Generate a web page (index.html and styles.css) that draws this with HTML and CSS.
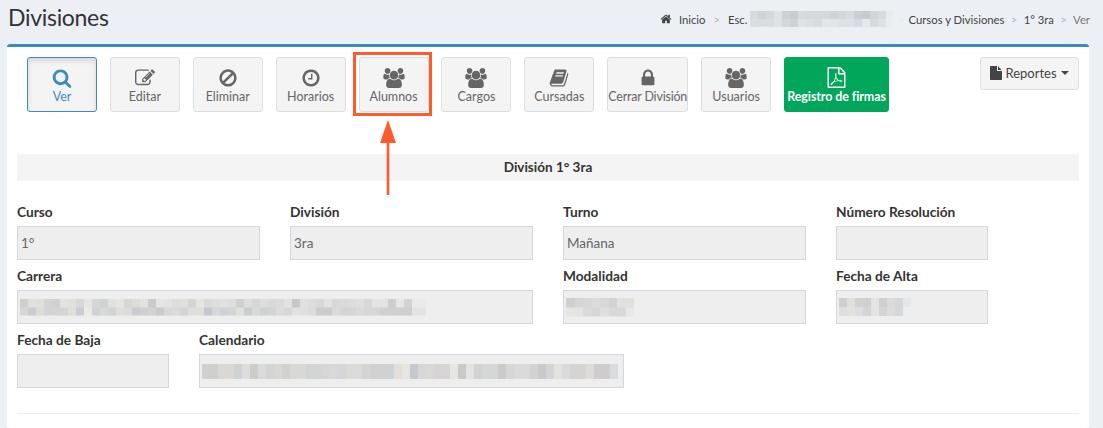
FILE: index.html
```html
<!DOCTYPE html>
<html>
<head>
<title>Divisiones</title>
<link rel="stylesheet" href="styles.css">
</head>

<body>
    <!-- ========================= Header ========================== -->
    <div class="header">
        <h1>Divisiones</h1>
        <div class="crumbs">
            <svg class="home" viewBox="0 0 1792 1792"><path d="M1472 992v480q0 26-19 45t-45 19h-384v-384h-256v384h-384q-26 0-45-19t-19-45v-480q0-1 .5-3t.5-3l575-474 575 474q1 2 1 6zm223-69l-62 74q-8 9-21 11h-3q-13 0-21-7l-692-577-692 577q-12 8-24 7-13-2-21-11l-62-74q-8-10-7-23.5t11-21.5l719-599q32-26 76-26t76 26l244 204v-195q0-14 9-23t23-9h192q14 0 23 9t9 23v408l219 182q10 8 11 21.5t-7 23.5z"/></svg>
            <span>Inicio</span>
            <span class="sep sep-wide">&gt;</span>
            <span>Esc.</span>
            <span class="blur blur-crumb"></span>
            <span class="sep sep-faint">&gt;</span>
            <span>Cursos y Divisiones</span>
            <span class="sep">&gt;</span>
            <span>1° 3ra</span>
            <span class="sep">&gt;</span>
            <span class="muted">Ver</span>
        </div>
    </div>

    <!-- ========================= Main box ========================== -->
    <div class="box">
        <div class="toolbar">
            <a class="btn active">
                <svg viewBox="0 0 1792 1792"><path d="M1216 832q0-185-131.5-316.5t-316.5-131.5-316.5 131.5-131.5 316.5 131.5 316.5 316.5 131.5 316.5-131.5 131.5-316.5zm512 832q0 52-38 90t-90 38q-54 0-90-38l-343-342q-179 124-399 124-143 0-273.5-55.5t-225-150-150-225-55.5-273.5 55.5-273.5 150-225 225-150 273.5-55.5 273.5 55.5 225 150 150 225 55.5 273.5q0 220-124 399l343 343q37 37 37 90z"/></svg>
                Ver
            </a>
            <a class="btn">
                <svg viewBox="0 0 1792 1792"><path d="M888 1184l116-116-152-152-116 116v56h96v96h56zm440-720q-16-16-33 1l-350 350q-17 17-1 33t33-1l350-350q17-17 1-33zm80 594v190q0 119-84.5 203.5t-203.5 84.5h-832q-119 0-203.5-84.5t-84.5-203.5v-832q0-119 84.5-203.5t203.5-84.5h832q63 0 117 25 15 7 18 23 3 17-9 29l-49 49q-14 14-32 8-23-6-45-6h-832q-66 0-113 47t-47 113v832q0 66 47 113t113 47h832q66 0 113-47t47-113v-126q0-13 9-22l64-64q15-15 35-7t20 29zm-96-738l288 288-672 672h-288v-288zm444 132l-92 92-288-288 92-92q28-28 68-28t68 28l152 152q28 28 28 68t-28 68z"/></svg>
                Editar
            </a>
            <a class="btn">
                <svg viewBox="0 0 1792 1792"><path d="M1440 893q0-161-87-295l-754 753q137 89 297 89 111 0 211.5-43.5t173.5-116.5 116-174.5 43-212.5zm-999 299l755-754q-135-91-300-91-148 0-273 73t-198 199-73 274q0 162 89 299zm1223-299q0 157-61 300t-163.5 246-245 164-298.5 61-298.5-61-245-164-163.5-246-61-300 61-299.5 163.5-245.5 245-164 298.5-61 298.5 61 245 164 163.5 245.5 61 299.5z"/></svg>
                Eliminar
            </a>
            <a class="btn">
                <svg viewBox="0 0 1792 1792"><path d="M1024 544v448q0 14-9 23t-23 9h-320q-14 0-23-9t-9-23v-64q0-14 9-23t23-9h224v-352q0-14 9-23t23-9h64q14 0 23 9t9 23zm416 352q0-148-73-273t-198-198-273-73-273 73-198 198-73 273 73 273 198 198 273 73 273-73 198-198 73-273zm224 0q0 209-103 385.5t-279.5 279.5-385.5 103-385.5-103-279.5-279.5-103-385.5 103-385.5 279.5-279.5 385.5-103 385.5 103 279.5 279.5 103 385.5z"/></svg>
                Horarios
            </a>
            <a class="btn">
                <svg class="wide" viewBox="0 0 1920 1792"><path d="M593 896q-162 5-265 128h-134q-82 0-138-40.5t-56-118.5q0-353 124-353 6 0 43.5 21t97.5 42.5 119 21.5q67 0 133-23-5 37-5 66 0 139 81 256zm1071 637q0 120-73 189.5t-194 69.5h-874q-121 0-194-69.5t-73-189.5q0-53 3.5-103.5t14-109 26.5-108.5 43-97.5 62-81 85.5-53.5 111.5-20q10 0 43 21.5t73 48 107 48 135 21.5 135-21.5 107-48 73-48 43-21.5q61 0 111.5 20t85.5 53.5 62 81 43 97.5 26.5 108.5 14 109 3.5 103.5zm-1024-1277q0 106-75 181t-181 75-181-75-75-181 75-181 181-75 181 75 75 181zm704 384q0 159-112.5 271.5t-271.5 112.5-271.5-112.5-112.5-271.5 112.5-271.5 271.5-112.5 271.5 112.5 112.5 271.5zm576 225q0 78-56 118.5t-138 40.5h-134q-103-123-265-128 81-117 81-256 0-29-5-66 66 23 133 23 59 0 119-21.5t97.5-42.5 43.5-21q124 0 124 353zm-128-609q0 106-75 181t-181 75-181-75-75-181 75-181 181-75 181 75 75 181z"/></svg>
                Alumnos
            </a>
            <a class="btn">
                <svg class="wide" viewBox="0 0 1920 1792"><path d="M593 896q-162 5-265 128h-134q-82 0-138-40.5t-56-118.5q0-353 124-353 6 0 43.5 21t97.5 42.5 119 21.5q67 0 133-23-5 37-5 66 0 139 81 256zm1071 637q0 120-73 189.5t-194 69.5h-874q-121 0-194-69.5t-73-189.5q0-53 3.5-103.5t14-109 26.5-108.5 43-97.5 62-81 85.5-53.5 111.5-20q10 0 43 21.5t73 48 107 48 135 21.5 135-21.5 107-48 73-48 43-21.5q61 0 111.5 20t85.5 53.5 62 81 43 97.5 26.5 108.5 14 109 3.5 103.5zm-1024-1277q0 106-75 181t-181 75-181-75-75-181 75-181 181-75 181 75 75 181zm704 384q0 159-112.5 271.5t-271.5 112.5-271.5-112.5-112.5-271.5 112.5-271.5 271.5-112.5 271.5 112.5 112.5 271.5zm576 225q0 78-56 118.5t-138 40.5h-134q-103-123-265-128 81-117 81-256 0-29-5-66 66 23 133 23 59 0 119-21.5t97.5-42.5 43.5-21q124 0 124 353zm-128-609q0 106-75 181t-181 75-181-75-75-181 75-181 181-75 181 75 75 181z"/></svg>
                Cargos
            </a>
            <a class="btn">
                <svg viewBox="0 0 1792 1792"><path d="M1703 478q40 57 18 129l-275 906q-19 64-76.5 107.5t-122.5 43.5h-923q-77 0-148.5-53.5t-99.5-131.5q-24-67-2-127 0-4 3-27t4-37q1-8-3-21.5t-3-19.5q2-11 8-21t16.5-23.5 16.5-23.5q23-38 45-91.5t30-91.5q3-10 .5-30t-.5-28q3-11 17-28t17-23q21-36 42-92t25-90q1-9-2.5-32t.5-28q4-13 22-30.5t22-22.5q19-26 42.5-84.5t27.5-96.5q1-8-3-25.5t-2-26.5q2-8 9-18t18-23 17-21q8-12 16.5-30.5t15-35 16-36 19.5-32 26.5-23.5 36-11.5 47.5 5.5l-1 3q38-9 51-9h761q74 0 114 56t18 130l-274 906q-36 119-71.5 153.5t-128.5 34.5h-869q-27 0-38 15-11 16-1 43 24 70 144 70h923q29 0 56-15.5t35-41.5l300-987q7-22 5-57 38 15 59 43zm-1064 2q-4 13 2 22.5t20 9.5h608q13 0 25.5-9.5t16.5-22.5l21-64q4-13-2-22.5t-20-9.5h-608q-13 0-25.5 9.5t-16.5 22.5zm-83 256q-4 13 2 22.5t20 9.5h608q13 0 25.5-9.5t16.5-22.5l21-64q4-13-2-22.5t-20-9.5h-608q-13 0-25.5 9.5t-16.5 22.5z"/></svg>
                Cursadas
            </a>
            <a class="btn btn-long">
                <svg viewBox="0 0 1152 1792"><path d="M320 768h512v-192q0-106-75-181t-181-75-181 75-75 181v192zm832 96v576q0 40-28 68t-68 28h-960q-40 0-68-28t-28-68v-576q0-40 28-68t68-28h32v-192q0-184 132-316t316-132 316 132 132 316v192h32q40 0 68 28t28 68z"/></svg>
                Cerrar División
            </a>
            <a class="btn">
                <svg class="wide" viewBox="0 0 1920 1792"><path d="M593 896q-162 5-265 128h-134q-82 0-138-40.5t-56-118.5q0-353 124-353 6 0 43.5 21t97.5 42.5 119 21.5q67 0 133-23-5 37-5 66 0 139 81 256zm1071 637q0 120-73 189.5t-194 69.5h-874q-121 0-194-69.5t-73-189.5q0-53 3.5-103.5t14-109 26.5-108.5 43-97.5 62-81 85.5-53.5 111.5-20q10 0 43 21.5t73 48 107 48 135 21.5 135-21.5 107-48 73-48 43-21.5q61 0 111.5 20t85.5 53.5 62 81 43 97.5 26.5 108.5 14 109 3.5 103.5zm-1024-1277q0 106-75 181t-181 75-181-75-75-181 75-181 181-75 181 75 75 181zm704 384q0 159-112.5 271.5t-271.5 112.5-271.5-112.5-112.5-271.5 112.5-271.5 271.5-112.5 271.5 112.5 112.5 271.5zm576 225q0 78-56 118.5t-138 40.5h-134q-103-123-265-128 81-117 81-256 0-29-5-66 66 23 133 23 59 0 119-21.5t97.5-42.5 43.5-21q124 0 124 353zm-128-609q0 106-75 181t-181 75-181-75-75-181 75-181 181-75 181 75 75 181z"/></svg>
                Usuarios
            </a>
            <a class="btn btn-green">
                <svg viewBox="0 0 1792 1792"><path d="M1596 380q28 28 48 76t20 88v1152q0 40-28 68t-68 28h-1344q-40 0-68-28t-28-68v-1600q0-40 28-68t68-28h896q40 0 88 20t76 48zm-444-244v376h376q-10-29-22-41l-313-313q-12-12-41-22zm384 1528v-1024h-416q-40 0-68-28t-28-68v-416h-768v1536h1280zm-514-593q33 26 84 56 59-7 117-7 147 0 177 49 16 22 2 52 0 1-1 2l-2 2v1q-6 38-71 38-48 0-115-20t-130-53q-221 24-392 83-153 262-242 262-15 0-28-7l-24-12q-1-1-6-5-10-10-6-36 9-40 56-91.5t132-96.5q14-9 23 6 2 2 2 4 52-85 107-197 68-136 104-262-24-82-30.5-159.5t6.5-127.5q11-40 42-40h22q23 0 35 15 18 21 9 68-2 6-4 8 1 3 1 8v30q-2 123-14 192 55 164 146 238zm-576 411q52-24 137-158-51 40-87.5 84t-49.5 74zm398-920q-15 42-2 132 1-7 7-44 0-3 7-43 1-4 4-8-1-1-1-2-1-2-1-3-1-22-13-36 0 1-1 2v2zm-124 661q135-54 284-81-2-1-13-9.5t-16-13.5q-76-67-127-176-27 86-83 197-30 56-45 83zm646-16q-24-24-140-24 76 28 124 28 14 0 18-1 0-1-2-3z"/></svg>
                Registro de firmas
            </a>
            <a class="btn-report">
                <svg viewBox="0 0 1536 1792"><path d="M1024 512v-472q22 14 36 28l408 408q14 14 28 36h-472zm-128 32q0 40 28 68t68 28h544v1056q0 40-28 68t-68 28h-1344q-40 0-68-28t-28-68v-1600q0-40 28-68t68-28h800v544z"/></svg>
                Reportes
                <span class="caret"></span>
            </a>
        </div>

        <div class="section-title">División 1° 3ra</div>

        <div class="form">
            <div class="row">
                <div class="col w243"><label>Curso</label><div class="field">1°</div></div>
                <div class="col w243"><label>División</label><div class="field">3ra</div></div>
                <div class="col w243"><label>Turno</label><div class="field">Mañana</div></div>
                <div class="col w152"><label>Número Resolución</label><div class="field"></div></div>
            </div>
            <div class="row">
                <div class="col w516"><label>Carrera</label><div class="field"><span class="blur blur-carrera"></span></div></div>
                <div class="col w243"><label>Modalidad</label><div class="field"><span class="blur blur-modalidad"></span></div></div>
                <div class="col w152"><label>Fecha de Alta</label><div class="field"><span class="blur blur-alta"></span></div></div>
            </div>
            <div class="row">
                <div class="col w152"><label>Fecha de Baja</label><div class="field"></div></div>
                <div class="col w425"><label>Calendario</label><div class="field"><span class="blur blur-calendario"></span></div></div>
            </div>
        </div>

        <hr>
    </div>

    <!-- annotation drawn over the screenshot -->
    <div class="mark"></div>
    <svg class="arrow" width="16" height="75" viewBox="0 0 16 75"><path d="M8 0L16 23H9.3V75H6.7V23H0z"/></svg>
</body>

</html>
```

FILE: styles.css
```css
* {
    margin: 0;
    padding: 0;
    box-sizing: border-box;
}

html, body {
    height: 100%;
    overflow: hidden;
}

body {
    position: relative;
    background-color: #ecf0f5;
    font-family: "Lato", "Noto Sans", sans-serif;
    font-size: 14px;
    color: #333;
}

/* header */
.header {
    display: flex;
    justify-content: space-between;
    align-items: center;
    height: 44px;
    padding: 0 13px 0 8px;
}

h1 {
    font-size: 23px;
    font-weight: 400;
    line-height: 34px;
    margin-top: -10px;
    letter-spacing: -0.3px;
}

.crumbs {
    display: flex;
    align-items: center;
    font-size: 11.3px;
    color: #444;
    margin-top: -6px;
}

.home {
    width: 12px;
    height: 12px;
    margin-right: 7px;
    fill: #444;
}

.sep {
    color: #b5b5b5;
    margin: 0 6.3px;
}

.sep-wide {
    margin: 0 8px;
}

.sep-faint {
    color: #e4e7ec;
    margin: 0 4.5px;
}

.muted {
    color: #777;
}

/* box */
.box {
    margin: 0 14px 0 7px;
    height: 384px;
    padding: 10px 10px 0;
    background-color: #fff;
    border-top: 3px solid #3c8dbc;
    border-radius: 3px;
}

.toolbar {
    display: flex;
    gap: 12.9px;
    padding-left: 10px;
}

.btn {
    display: flex;
    flex-direction: column;
    align-items: center;
    justify-content: flex-end;
    flex: none;
    width: 70px;
    height: 55px;
    padding-bottom: 6px;
    background-color: #f4f4f4;
    border: 1px solid #ddd;
    border-radius: 3px;
    font-size: 12.5px;
    line-height: 16px;
    color: #666;
    white-space: nowrap;
}

.btn svg {
    width: 20px;
    height: 20px;
    margin-bottom: 1px;
    fill: #666;
}

.btn svg.wide {
    width: 22px;
}

.btn.active {
    border-color: #3c8dbc;
    color: #3c8dbc;
    box-shadow: inset 0 3px 5px rgba(0, 0, 0, 0.125);
}

.btn.active svg {
    fill: #3c8dbc;
}

.btn-long {
    width: 81px;
    letter-spacing: -0.2px;
}

.btn-green {
    width: 105px;
    background-color: #00a65a;
    border-color: #00a65a;
    color: #fff;
    font-weight: 700;
    letter-spacing: -0.1px;
}

.btn-green svg {
    width: 21px;
    height: 21px;
    fill: #fff;
}

.btn-report {
    display: flex;
    align-items: center;
    justify-content: center;
    margin-left: auto;
    width: 99px;
    height: 33px;
    padding-bottom: 1px;
    background-color: #f4f4f4;
    border: 1px solid #ddd;
    border-radius: 3px;
    font-size: 13px;
    color: #444;
}

.btn-report svg {
    width: 12px;
    height: 14px;
    margin-right: 3px;
    fill: #444;
}

.caret {
    width: 0;
    height: 0;
    margin-left: 4px;
    border-top: 4px solid #444;
    border-left: 4px solid transparent;
    border-right: 4px solid transparent;
}

/* form */
.section-title {
    margin-top: 42px;
    height: 27px;
    line-height: 27px;
    background-color: #f4f4f4;
    text-align: center;
    font-size: 13.5px;
    font-weight: 700;
}

.form {
    margin-top: 21px;
}

.row {
    display: flex;
    gap: 30px;
    margin-bottom: 6px;
}

.w152 { width: 152px; }
.w243 { width: 243px; }
.w425 { width: 425px; }
.w516 { width: 516px; }

label {
    display: block;
    height: 20px;
    margin-bottom: 4px;
    line-height: 20px;
    font-size: 13.7px;
    font-weight: 700;
    white-space: nowrap;
}

.field {
    display: flex;
    align-items: center;
    height: 34px;
    padding-left: 3px;
    background-color: #eee;
    border: 1px solid #d2d6de;
    font-size: 13.5px;
    color: #666;
}

hr {
    margin-top: 25px;
    border: none;
    border-top: 1px solid #eee;
}

/* pixelated text */
.blur {
    display: block;
    flex: none;
    background-repeat: no-repeat;
    background-size: 100% 50%;
    background-position: top, bottom;
}

.field .blur {
    margin-left: -1px;
}

.blur-crumb {
    width: 143px;
    height: 16px;
    margin-left: 2.5px;
    background-image:
        linear-gradient(90deg, #d7d9db 8px, #cfd3d6 0 16px, #d4d8da 0 24px, #dfe2e4 0 32px, #ced1d4 0 40px, #c9cbce 0 48px, #d6d9dd 0 56px, #d6d7d9 0 64px, #d5d8da 0 80px, #d0d3d6 0 88px, #d4d7d9 0 96px, #d9dbdd 0 104px, #ccced1 0 112px, #c8cacd 0 120px, #d2d5d7 0 128px, #d8dbde 0 136px, #e8eaed 0),
        linear-gradient(90deg, #dcdfe1 8px, #d9dce0 0 16px, #d8dde4 0 24px, #e0e3e6 0 32px, #d4d7db 0 40px, #ced2d5 0 48px, #dfe2e6 0 56px, #dbdee2 0 64px, #d7dbdf 0 72px, #e3e6ea 0 80px, #e2e5e8 0 88px, #dde0e4 0 96px, #dde1e6 0 104px, #d5d9e2 0 112px, #e6e8ec 0 120px, #d7dadd 0 128px, #dee1e4 0 136px, #e8ebef 0);
}

.blur-carrera {
    width: 406px;
    height: 17px;
    background-image:
        linear-gradient(90deg, #cfcfcc 8px, #e0e1df 0 16px, #dfdfd9 0 24px, #d2d3d2 0 32px, #cfd0d2 0 40px, #e3e2e0 0 48px, #e0dfdc 0 56px, #d6d8da 0 64px, #e5e5e5 0 72px, #d5d6d6 0 80px, #cfd2d2 0 88px, #dfe0df 0 96px, #e4e4e2 0 104px, #d6d7d5 0 112px, #dcdcd8 0 120px, #e3e3dd 0 128px, #ccc9cd 0 136px, #e4e5e5 0 144px, #e2e3e2 0 152px, #dcdddc 0 160px, #dee0de 0 168px, #d4d5d3 0 176px, #e5e5e3 0 184px, #dadbd9 0 192px, #dddedd 0 200px, #e0e1e0 0 208px, #dcdddd 0 216px, #cfcfcf 0 224px, #dcdddc 0 232px, #d6d7d5 0 240px, #dddedd 0 248px, #d8d9d9 0 256px, #dbdbda 0 264px, #e3e2e2 0 272px, #c8c8c9 0 280px, #e1e1e1 0 288px, #dcdddd 0 296px, #d7d8d9 0 304px, #e0e2e3 0 312px, #d9d8d8 0 320px, #d8dadc 0 328px, #dcdcdc 0 336px, #dfdfdd 0 344px, #d9d8d8 0 352px, #e3e4e4 0 360px, #e3e3e3 0 368px, #cdcdcd 0 376px, #e6e6e6 0 384px, #d2d3d2 0 392px, #e9eaeb 0),
        linear-gradient(90deg, #d7d7d2 8px, #c9cdd0 0 16px, #dbdcd8 0 24px, #d3d4d2 0 32px, #d3d4d4 0 40px, #d5d5d3 0 48px, #dfded9 0 56px, #c9ccd2 0 64px, #eceae9 0 72px, #cfd1d3 0 80px, #d6d9da 0 88px, #d2d4d0 0 96px, #dedfdd 0 104px, #dbdcda 0 112px, #ccccd0 0 120px, #cfcfcf 0 128px, #d2d2ce 0 136px, #ccc9cc 0 144px, #d5d8da 0 152px, #dadbd6 0 160px, #d2d4d7 0 168px, #dcdee0 0 176px, #dfded7 0 184px, #c3c7cf 0 192px, #d5d8d8 0 200px, #ced2d6 0 208px, #d2d5d6 0 216px, #e0e0dd 0 224px, #cbcccc 0 232px, #d5dadb 0 240px, #d1d2d0 0 248px, #d2d5d4 0 256px, #dcddda 0 264px, #d3d9d8 0 272px, #e2e1e1 0 280px, #dfdfe0 0 288px, #d9dddc 0 296px, #cdcccb 0 304px, #cccbca 0 312px, #d9dbdb 0 320px, #d6d3d3 0 328px, #d6d4d4 0 336px, #dbd9d9 0 344px, #d8d6d6 0 352px, #d4d7d8 0 360px, #d0d0ce 0 368px, #cfcfce 0 376px, #cfcfcd 0 384px, #cececd 0 392px, #e2e4e3 0);
}

.blur-modalidad {
    width: 68px;
    height: 19px;
    background-image:
        linear-gradient(90deg, #cfcfcd 9px, #d5d6d5 0 17px, #d6d8d8 0 26px, #dadbdb 0 34px, #d8d8d8 0 43px, #d3d3d5 0 51px, #e0e1e0 0 60px, #e0e0dc 0),
        linear-gradient(90deg, #e5e5e2 9px, #e3e3df 0 17px, #d9dbdb 0 26px, #d5d6d8 0 34px, #dfdfdf 0 43px, #d9d9da 0 60px, #e8e8e8 0);
}

.blur-alta {
    width: 72px;
    height: 18px;
    background-image:
        linear-gradient(90deg, #cdcfcf 8px, #dfdfdc 0 16px, #d1d1d1 0 24px, #ced0d1 0 32px, #e4e4e2 0 40px, #cfcfcf 0 48px, #dbdad8 0 56px, #d4d6d8 0 64px, #e4e8e8 0),
        linear-gradient(90deg, #dddedd 8px, #e2e1dc 0 16px, #dbdde0 0 24px, #d3d5d6 0 32px, #e3e3e1 0 40px, #d3d4d4 0 48px, #dcdcda 0 56px, #d5d8da 0 64px, #eeeeee 0);
}

.blur-calendario {
    width: 416px;
    height: 15px;
    background-size: 100% 100%;
    background-image:
        linear-gradient(90deg, #d0d0ce 8px, #cfcfd0 0 16px, #d9d8d4 0 32px, #cfd1d2 0 40px, #dcdddd 0 48px, #cccdc9 0 56px, #d7dcdf 0 64px, #d2d5d4 0 72px, #d7d8d3 0 80px, #d0d2d2 0 88px, #d8d8d6 0 104px, #d1d4d2 0 112px, #d3d4d5 0 120px, #d4d7d4 0 128px, #d9d8d8 0 136px, #d5d6d8 0 144px, #dadad7 0 152px, #dcdbd5 0 160px, #d4d5d3 0 168px, #cfd0d0 0 176px, #d2d1d1 0 184px, #cdd3d4 0 192px, #e0dfda 0 200px, #e6e5df 0 208px, #c6c8cd 0 216px, #d5d6d8 0 224px, #d8d8d7 0 232px, #d6d5d2 0 248px, #e6e6e6 0 256px, #c9c9c6 0 264px, #e3e3e3 0 272px, #d3d4d2 0 280px, #d6d8d7 0 288px, #d5d7d6 0 296px, #cbcac6 0 304px, #d8d6d2 0 312px, #d9dadc 0 328px, #d1d2d4 0 336px, #c9c9c9 0 344px, #d3d5d5 0 352px, #e2e2de 0 360px, #d8dadc 0 368px, #d5d4d2 0 384px, #dddcda 0 392px, #cecccc 0 408px, #d8dcdc 0);
}

/* orange annotation */
.mark {
    position: absolute;
    left: 353px;
    top: 52px;
    width: 79px;
    height: 64px;
    border: 3px solid #ff5a2b;
}

.arrow {
    position: absolute;
    left: 380px;
    top: 120px;
    fill: #ff5a2b;
}
```
